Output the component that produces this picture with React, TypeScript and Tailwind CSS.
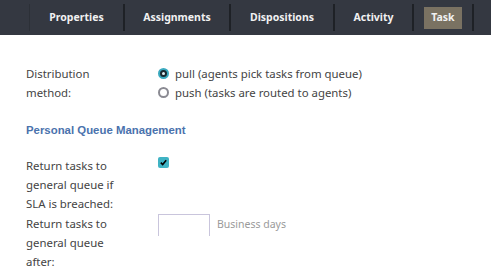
import React from "react";

const tabs = [
  { label: "Properties", w: "w-[93px]" },
  { label: "Assignments", w: "w-[104px]" },
  { label: "Dispositions", w: "w-[102px]" },
  { label: "Activity", w: "w-[77px]" },
];

function Radio({ checked }: { checked?: boolean }) {
  if (checked) {
    return (
      <span className="w-[11px] h-[11px] rounded-full bg-[#1c2a30] border-[2px] border-[#3aa9bf] flex items-center justify-center shrink-0">
        <span className="w-[3px] h-[3px] rounded-full bg-[#dfeef2]" />
      </span>
    );
  }
  return <span className="w-[11px] h-[11px] rounded-full border-[2px] border-[#8a8a92] bg-white shrink-0" />;
}

export default function App() {
  return (
    <div className="w-[491px] h-[277px] overflow-hidden bg-white" style={{ fontFamily: '"Noto Sans", "Open Sans", sans-serif' }}>
      <nav className="h-[35px] bg-[#343841] flex items-stretch pl-[29px]">
        <div className="w-[1px] my-[4px] bg-[#2c3037]" />
        {tabs.map((t) => (
          <React.Fragment key={t.label}>
            <div className={`${t.w} flex items-center justify-center text-[10.5px] font-bold text-[#f1f1f1]`}>{t.label}</div>
            <div className="w-[2px] my-[4px] bg-[#1e2126]" />
          </React.Fragment>
        ))}
        <div className="w-[58px] flex items-center justify-center">
          <span className="h-[22px] w-[38px] flex items-center justify-center bg-[#7a7262] text-[10.5px] font-bold text-[#f1f1f1]">Task</span>
        </div>
        <div className="w-[2px] my-[4px] bg-[#1e2126]" />
      </nav>

      <div className="pl-[26px] pt-[29px] text-[11.4px] leading-[19px] text-[#444]">
        <div className="flex">
          <div className="w-[132px]">
            Distribution
            <br />
            method:
          </div>
          <div className="flex flex-col">
            <label className="flex items-center gap-[6px]">
              <Radio checked />
              <span>pull (agents pick tasks from queue)</span>
            </label>
            <label className="flex items-center gap-[6px]">
              <Radio />
              <span>push (tasks are routed to agents)</span>
            </label>
          </div>
        </div>

        <div
          className="mt-[19px] font-bold text-[11.4px] text-[#4a72ad]"
          style={{ fontFamily: '"Liberation Sans", Arial, sans-serif' }}
        >
          Personal Queue Management
        </div>

        <div className="flex mt-[16px]">
          <div className="w-[132px]">
            Return tasks to
            <br />
            general queue if
            <br />
            SLA is breached:
          </div>
          <div className="pt-[1px]">
            <span className="w-[11px] h-[11px] rounded-[2px] bg-[#3fb3c4] flex items-center justify-center">
              <svg width="9" height="9" viewBox="0 0 10 10">
                <path d="M2 5.2 L4.1 7.3 L8 2.6" fill="none" stroke="#000" strokeWidth="1.8" />
              </svg>
            </span>
          </div>
        </div>

        <div className="flex mt-[1px]">
          <div className="w-[132px]">
            Return tasks to
            <br />
            general queue
            <br />
            after:
          </div>
          <div className="flex items-start gap-[7px]">
            <div className="w-[52px] h-[22px] border border-[#c9c5dc] border-b-0 bg-white" />
            <span className="text-[10.5px] text-[#9a9a9a] leading-[19px] pt-[1px]">Business days</span>
          </div>
        </div>
      </div>
    </div>
  );
}
